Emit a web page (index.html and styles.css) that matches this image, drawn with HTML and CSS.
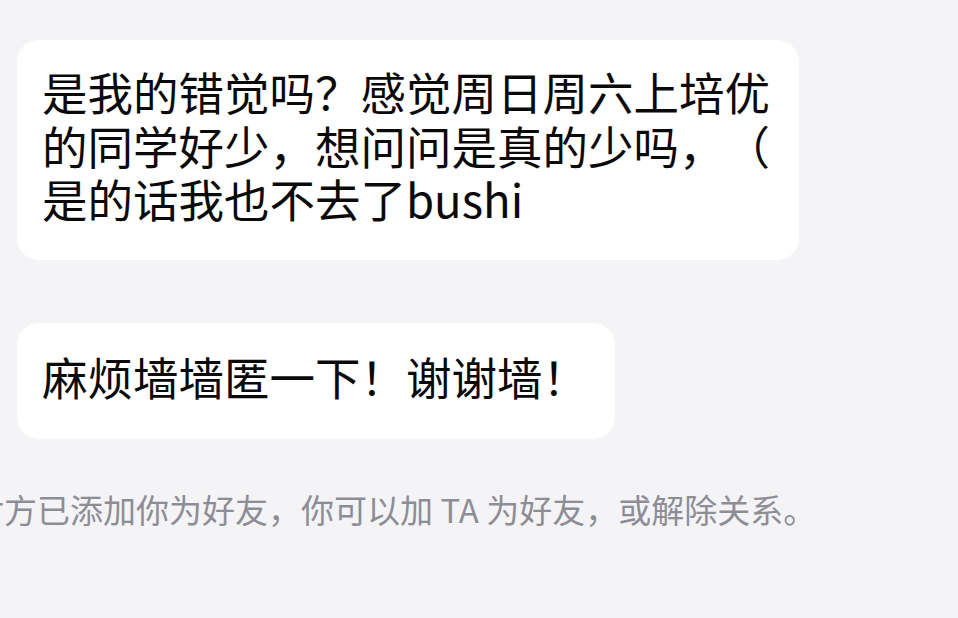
FILE: index.html
```html
<!DOCTYPE html>
<html lang="zh-CN">
<head>
<meta charset="utf-8">
<link rel="stylesheet" href="styles.css">
</head>
<body>
<main class="chat">
  <div class="bubble bubble-first">是我的错觉吗？感觉周日周六上培优<br>的同学好少，想问问是真的少吗，（<br>是的话我也不去了bushi</div>
  <div class="bubble bubble-second">麻烦墙墙匿一下！谢谢墙！</div>
  <p class="notice">对方已添加你为好友，你可以加 TA 为好友，或解除关系。</p>
</main>
</body>
</html>
```
FILE: styles.css
```css
html, body {
  margin: 0;
  padding: 0;
  background: #f4f4f6;
  overflow: hidden;
}
body {
  width: 958px;
  height: 618px;
  font-family: "Noto Sans CJK SC", "Noto Sans", sans-serif;
  text-spacing-trim: space-all;
}
.chat {
  display: flex;
  flex-direction: column;
  align-items: flex-start;
  padding: 40px 0 0 17px;
}
.bubble {
  background: #ffffff;
  border-radius: 22px;
  color: #0a0a0a;
  font-size: 45.5px;
  line-height: 53.5px;
  white-space: nowrap;
  text-spacing-trim: space-all;
}
.bubble-first {
  padding: 25px 29px 34px 25px;
}
.bubble-second {
  margin-top: 63px;
  padding: 27px 27px 36px 25px;
}
.notice {
  margin: 50px 0 0 -46px;
  font-size: 33px;
  line-height: 40px;
  color: #8d8d96;
  white-space: nowrap;
  text-spacing-trim: space-all;
}
```
